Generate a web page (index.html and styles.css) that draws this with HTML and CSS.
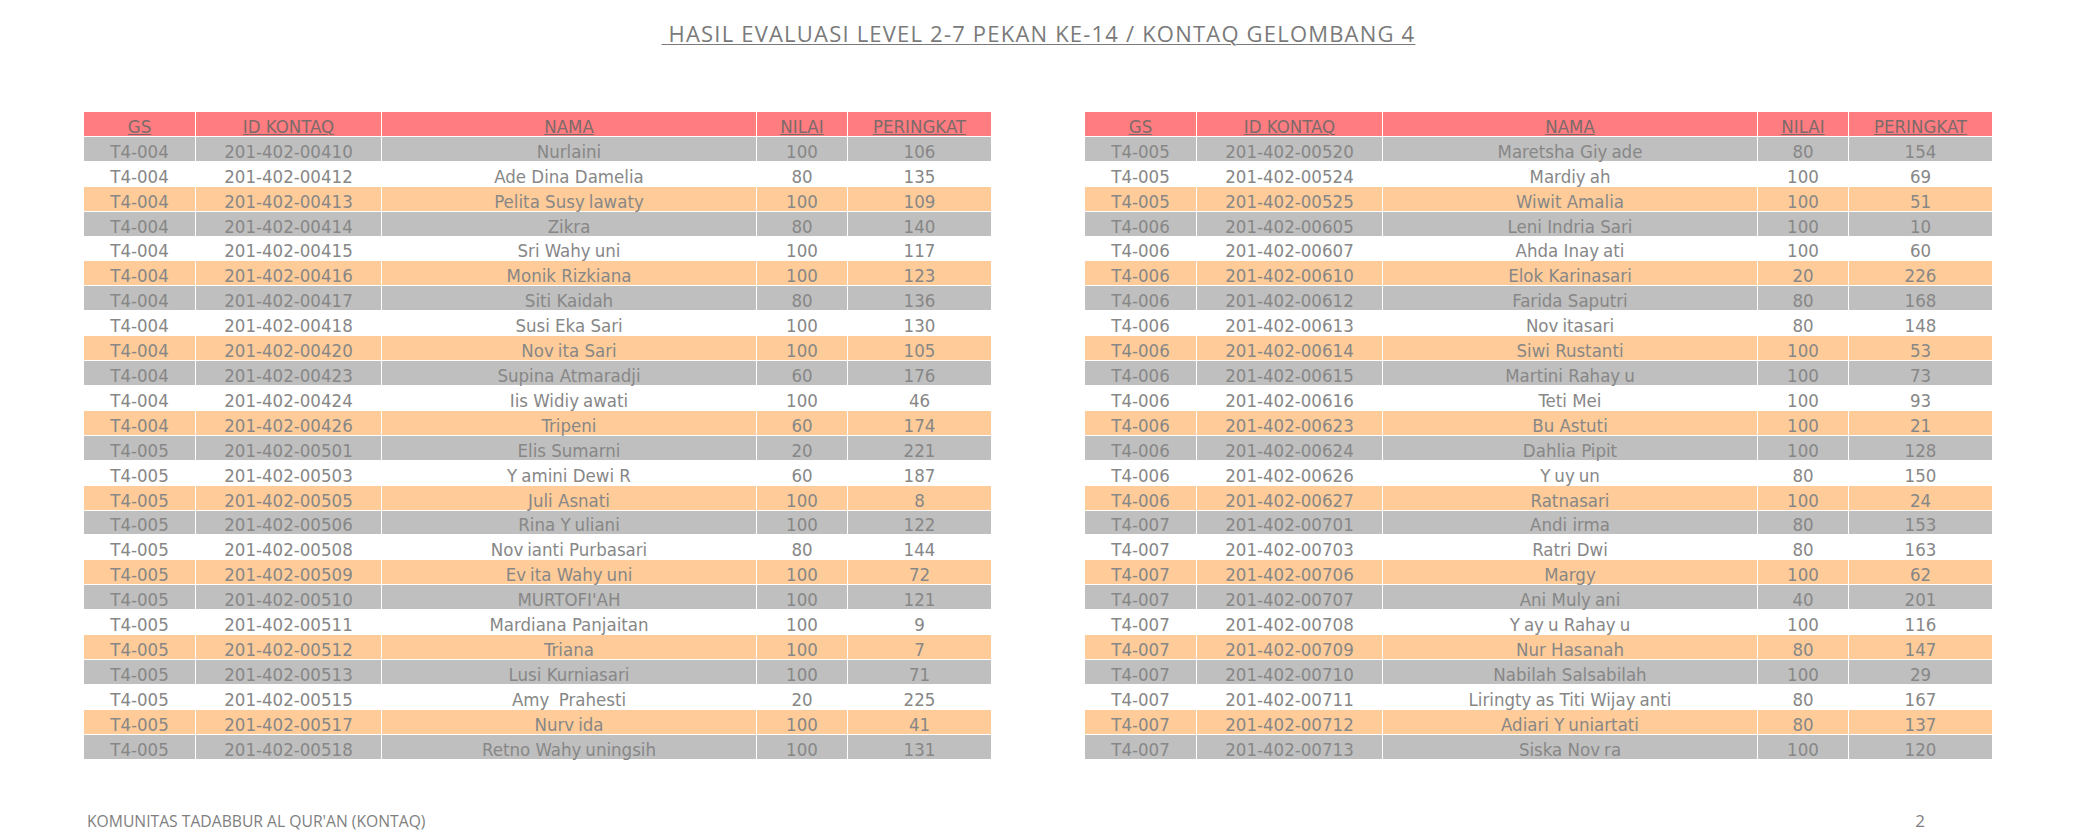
FILE: index.html
```html
<!DOCTYPE html>
<html lang="id">
<head>
<meta charset="utf-8">
<title>Hasil Evaluasi Level 2-7 Pekan ke-14</title>
<link rel="stylesheet" href="styles.css">
</head>
<body>
<div class="page">
  <h1 class="title"><span class="title-text">&nbsp;HASIL EVALUASI LEVEL 2-7 PEKAN KE-14 / KONTAQ GELOMBANG 4</span></h1>

  <div class="tables">
    <table class="score">
      <colgroup><col class="c-gs"><col class="c-id"><col class="c-nama"><col class="c-nilai"><col class="c-rank"></colgroup>
      <thead><tr><th>GS</th><th>ID KONTAQ</th><th>NAMA</th><th>NILAI</th><th>PERINGKAT</th></tr></thead>
      <tbody>
        <tr class="r-gray"><td>T4-004</td><td>201-402-00410</td><td>Nurlaini</td><td>100</td><td>106</td></tr>
        <tr class="r-white"><td>T4-004</td><td>201-402-00412</td><td>Ade Dina Damelia</td><td>80</td><td>135</td></tr>
        <tr class="r-orange"><td>T4-004</td><td>201-402-00413</td><td>Pelita Susy<span class="gap"></span>lawaty</td><td>100</td><td>109</td></tr>
        <tr class="r-gray"><td>T4-004</td><td>201-402-00414</td><td>Zikra</td><td>80</td><td>140</td></tr>
        <tr class="r-white"><td>T4-004</td><td>201-402-00415</td><td>Sri Wahy<span class="gap"></span>uni</td><td>100</td><td>117</td></tr>
        <tr class="r-orange"><td>T4-004</td><td>201-402-00416</td><td>Monik Rizkiana</td><td>100</td><td>123</td></tr>
        <tr class="r-gray"><td>T4-004</td><td>201-402-00417</td><td>Siti Kaidah</td><td>80</td><td>136</td></tr>
        <tr class="r-white"><td>T4-004</td><td>201-402-00418</td><td>Susi Eka Sari</td><td>100</td><td>130</td></tr>
        <tr class="r-orange"><td>T4-004</td><td>201-402-00420</td><td>Nov<span class="gap"></span>ita Sari</td><td>100</td><td>105</td></tr>
        <tr class="r-gray"><td>T4-004</td><td>201-402-00423</td><td>Supina Atmaradji</td><td>60</td><td>176</td></tr>
        <tr class="r-white"><td>T4-004</td><td>201-402-00424</td><td>Iis Widiy<span class="gap"></span>awati</td><td>100</td><td>46</td></tr>
        <tr class="r-orange"><td>T4-004</td><td>201-402-00426</td><td>Tripeni</td><td>60</td><td>174</td></tr>
        <tr class="r-gray"><td>T4-005</td><td>201-402-00501</td><td>Elis Sumarni</td><td>20</td><td>221</td></tr>
        <tr class="r-white"><td>T4-005</td><td>201-402-00503</td><td>Y<span class="gap"></span>amini Dewi R</td><td>60</td><td>187</td></tr>
        <tr class="r-orange"><td>T4-005</td><td>201-402-00505</td><td>Juli Asnati</td><td>100</td><td>8</td></tr>
        <tr class="r-gray"><td>T4-005</td><td>201-402-00506</td><td>Rina Y<span class="gap"></span>uliani</td><td>100</td><td>122</td></tr>
        <tr class="r-white"><td>T4-005</td><td>201-402-00508</td><td>Nov<span class="gap"></span>ianti Purbasari</td><td>80</td><td>144</td></tr>
        <tr class="r-orange"><td>T4-005</td><td>201-402-00509</td><td>Ev<span class="gap"></span>ita Wahy<span class="gap"></span>uni</td><td>100</td><td>72</td></tr>
        <tr class="r-gray"><td>T4-005</td><td>201-402-00510</td><td>MURTOFI'AH</td><td>100</td><td>121</td></tr>
        <tr class="r-white"><td>T4-005</td><td>201-402-00511</td><td>Mardiana Panjaitan</td><td>100</td><td>9</td></tr>
        <tr class="r-orange"><td>T4-005</td><td>201-402-00512</td><td>Triana</td><td>100</td><td>7</td></tr>
        <tr class="r-gray"><td>T4-005</td><td>201-402-00513</td><td>Lusi Kurniasari</td><td>100</td><td>71</td></tr>
        <tr class="r-white"><td>T4-005</td><td>201-402-00515</td><td>Amy<span class="gap"></span> Prahesti</td><td>20</td><td>225</td></tr>
        <tr class="r-orange"><td>T4-005</td><td>201-402-00517</td><td>Nurv<span class="gap"></span>ida</td><td>100</td><td>41</td></tr>
        <tr class="r-gray"><td>T4-005</td><td>201-402-00518</td><td>Retno Wahy<span class="gap"></span>uningsih</td><td>100</td><td>131</td></tr>
      </tbody>
    </table>

    <table class="score">
      <colgroup><col class="c-gs"><col class="c-id"><col class="c-nama"><col class="c-nilai"><col class="c-rank"></colgroup>
      <thead><tr><th>GS</th><th>ID KONTAQ</th><th>NAMA</th><th>NILAI</th><th>PERINGKAT</th></tr></thead>
      <tbody>
        <tr class="r-gray"><td>T4-005</td><td>201-402-00520</td><td>Maretsha Giy<span class="gap"></span>ade</td><td>80</td><td>154</td></tr>
        <tr class="r-white"><td>T4-005</td><td>201-402-00524</td><td>Mardiy<span class="gap"></span>ah</td><td>100</td><td>69</td></tr>
        <tr class="r-orange"><td>T4-005</td><td>201-402-00525</td><td>Wiwit Amalia</td><td>100</td><td>51</td></tr>
        <tr class="r-gray"><td>T4-006</td><td>201-402-00605</td><td>Leni Indria Sari</td><td>100</td><td>10</td></tr>
        <tr class="r-white"><td>T4-006</td><td>201-402-00607</td><td>Ahda Inay<span class="gap"></span>ati</td><td>100</td><td>60</td></tr>
        <tr class="r-orange"><td>T4-006</td><td>201-402-00610</td><td>Elok Karinasari</td><td>20</td><td>226</td></tr>
        <tr class="r-gray"><td>T4-006</td><td>201-402-00612</td><td>Farida Saputri</td><td>80</td><td>168</td></tr>
        <tr class="r-white"><td>T4-006</td><td>201-402-00613</td><td>Nov<span class="gap"></span>itasari</td><td>80</td><td>148</td></tr>
        <tr class="r-orange"><td>T4-006</td><td>201-402-00614</td><td>Siwi Rustanti</td><td>100</td><td>53</td></tr>
        <tr class="r-gray"><td>T4-006</td><td>201-402-00615</td><td>Martini Rahay<span class="gap"></span>u</td><td>100</td><td>73</td></tr>
        <tr class="r-white"><td>T4-006</td><td>201-402-00616</td><td>Teti Mei</td><td>100</td><td>93</td></tr>
        <tr class="r-orange"><td>T4-006</td><td>201-402-00623</td><td>Bu Astuti</td><td>100</td><td>21</td></tr>
        <tr class="r-gray"><td>T4-006</td><td>201-402-00624</td><td>Dahlia Pipit</td><td>100</td><td>128</td></tr>
        <tr class="r-white"><td>T4-006</td><td>201-402-00626</td><td>Y<span class="gap"></span>uy<span class="gap"></span>un</td><td>80</td><td>150</td></tr>
        <tr class="r-orange"><td>T4-006</td><td>201-402-00627</td><td>Ratnasari</td><td>100</td><td>24</td></tr>
        <tr class="r-gray"><td>T4-007</td><td>201-402-00701</td><td>Andi irma</td><td>80</td><td>153</td></tr>
        <tr class="r-white"><td>T4-007</td><td>201-402-00703</td><td>Ratri Dwi</td><td>80</td><td>163</td></tr>
        <tr class="r-orange"><td>T4-007</td><td>201-402-00706</td><td>Margy</td><td>100</td><td>62</td></tr>
        <tr class="r-gray"><td>T4-007</td><td>201-402-00707</td><td>Ani Muly<span class="gap"></span>ani</td><td>40</td><td>201</td></tr>
        <tr class="r-white"><td>T4-007</td><td>201-402-00708</td><td>Y<span class="gap"></span>ay<span class="gap"></span>u Rahay<span class="gap"></span>u</td><td>100</td><td>116</td></tr>
        <tr class="r-orange"><td>T4-007</td><td>201-402-00709</td><td>Nur Hasanah</td><td>80</td><td>147</td></tr>
        <tr class="r-gray"><td>T4-007</td><td>201-402-00710</td><td>Nabilah Salsabilah</td><td>100</td><td>29</td></tr>
        <tr class="r-white"><td>T4-007</td><td>201-402-00711</td><td>Liringty<span class="gap"></span>as Titi Wijay<span class="gap"></span>anti</td><td>80</td><td>167</td></tr>
        <tr class="r-orange"><td>T4-007</td><td>201-402-00712</td><td>Adiari Y<span class="gap"></span>uniartati</td><td>80</td><td>137</td></tr>
        <tr class="r-gray"><td>T4-007</td><td>201-402-00713</td><td>Siska Nov<span class="gap"></span>ra</td><td>100</td><td>120</td></tr>
      </tbody>
    </table>
  </div>

  <footer class="footer">
    <span class="footer-org">KOMUNITAS TADABBUR AL QUR'AN (KONTAQ)</span>
    <span class="footer-page">2</span>
  </footer>
</div>
</body>
</html>
```

FILE: styles.css
```css
html, body {
  margin: 0;
  padding: 0;
  background: #ffffff;
}

.page {
  width: 2077px;
  height: 835px;
  overflow: hidden;
  font-family: "Open Sans", "Noto Sans", sans-serif;
  color: #7f7f7f;
}

.title {
  margin: 0;
  padding-top: 20px;
  text-align: center;
  font-size: 22px;
  line-height: 26px;
  font-weight: 400;
}

.title-text {
  letter-spacing: 1.2px;
  text-decoration: underline;
  text-decoration-thickness: 1px;
  text-underline-offset: 2px;
  color: #7a7a7a;
}

.tables {
  display: flex;
  gap: 92px;
  padding-left: 83px;
  margin-top: 65px;
}

.score {
  border-collapse: collapse;
  table-layout: fixed;
  width: 908px;
  font-family: "Liberation Sans Narrow", "DejaVu Sans Condensed", "Roboto Condensed", "Liberation Sans", sans-serif;
  font-stretch: condensed;
  font-size: 18.5px;
  color: #878787;
}

.c-gs { width: 112px; }
.c-id { width: 186px; }
.c-nama { width: 375px; }
.c-nilai { width: 91px; }
.c-rank { width: 144px; }

.score th,
.score td {
  border: 1px solid #ffffff;
  padding: 0;
  height: 23.92px;
  line-height: 19px;
  text-align: center;
  vertical-align: bottom;
  white-space: nowrap;
  font-weight: 400;
}

.score th {
  background: #ff7c80;
  color: #7d6a6a;
  text-decoration: underline;
  text-decoration-thickness: 1px;
}

.r-gray td { background: #bfbfbf; }
.r-white td { background: #ffffff; }
.r-orange td { background: #ffcc99; }

.gap {
  display: inline-block;
  width: 4px;
}

.footer {
  display: flex;
  justify-content: space-between;
  align-items: baseline;
  margin-top: 51px;
  padding-left: 87px;
  padding-right: 152px;
  font-size: 15.7px;
  line-height: 20px;
  color: #7f7f7f;
}

.footer-page {
  font-size: 17px;
}
```
